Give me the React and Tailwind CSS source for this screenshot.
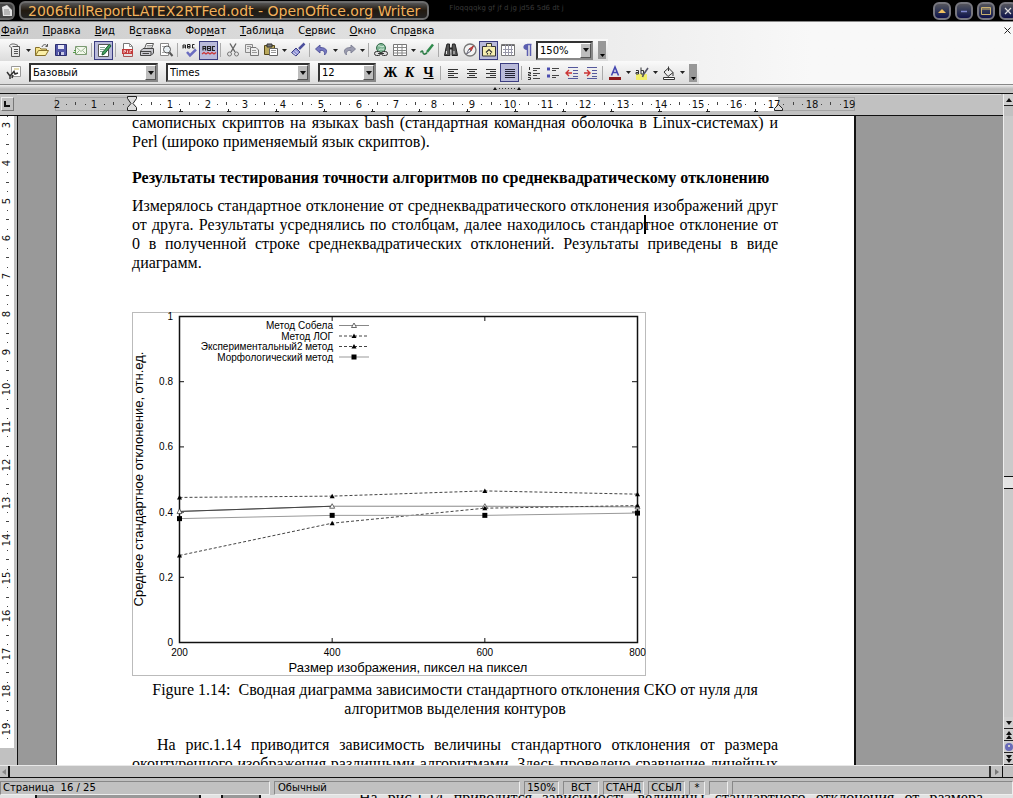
import React from "react";

const UI = "font-['DejaVu_Sans','Liberation_Sans',sans-serif]";

function Icon({ children }) {
  return (
    <svg width="16" height="16" viewBox="0 0 16 16" fill="none" stroke="#333" strokeWidth="1" aria-hidden="true" className="shrink-0">
      {children}
    </svg>
  );
}

const icons = {
  fresh: (
    <Icon>
      <path d="M2.500 3.500 C5 1 8 2 11 3.500 M5.500 4.500 H12.500 V14.500 H4.500 V6 M7 7.500 H11 M7 9.500 H11 M7 11.500 H11" stroke="#555" />
      <path d="M2 4 L5 6" stroke="#777" />
    </Icon>
  ),
  open: (
    <Icon>
      <path d="M1.500 13.500 V5.500 H5.500 L7 7 H12.500 V9" fill="#f5e38a" stroke="#86702a" />
      <path d="M1.500 13.500 L4.500 8.500 H14.500 L11.500 13.500 Z" fill="#fbf0a8" stroke="#86702a" />
      <path d="M8 5 C9 2 12 2 13 4 M11.500 4.500 H13.500 V2" stroke="#555" />
    </Icon>
  ),
  save: (
    <Icon>
      <path d="M2.500 2.500 H13.500 V13.500 H2.500 Z" fill="#5357a8" stroke="#2c2f70" />
      <path d="M5 3 H11 V7 H5 Z" fill="#e8e8f6" stroke="none" />
      <path d="M5 10 H11 V13 H5 Z" fill="#c9cbe6" stroke="none" />
      <path d="M6 10 H8 V13 H6 Z" fill="#2c2f70" stroke="none" />
    </Icon>
  ),
  mail: (
    <Icon>
      <path d="M3.500 4.500 H14.500 V12.500 H3.500 Z" fill="#f2f8ec" stroke="#7b9a72" />
      <path d="M4 5 L9 9.500 L14 5 M4 12 L7.500 8.500 M14 12 L10.500 8.500" stroke="#9db894" />
      <path d="M1 10.500 H4 M2 8.500 H4" stroke="#559a48" />
    </Icon>
  ),
  edit: (
    <Icon>
      <path d="M2.500 2.500 H12.500 V14.500 H2.500 Z" fill="#fff" stroke="#555" />
      <path d="M4 5.500 H9 M4 7.500 H8 M4 9.500 H7" stroke="#8a9" />
      <path d="M13.500 2 L15 4 L8.500 12 L6 13 L6.500 10.500 Z" fill="#3fa15c" stroke="#1f5c34" />
    </Icon>
  ),
  pdf: (
    <Icon>
      <path d="M3.500 7 V1.500 H9.500 L12.500 4.500 V7" fill="#fff" stroke="#777" />
      <path d="M9.500 1.500 V4.500 H12.500" stroke="#999" />
      <path d="M2 7 H13 V12 H2 Z" fill="#c33a3a" stroke="none" />
      <path d="M4 11 V8.500 H5.500 V10 M7.500 11 V8.500 M10 11 V8.500 H12" stroke="#f4c8c8" />
      <path d="M3.500 12 V14.500 H12.500 V12" stroke="#a55" />
    </Icon>
  ),
  print: (
    <Icon>
      <path d="M5.500 6.500 L7.500 1.500 H14.500 L12.500 6.500" fill="#fff" stroke="#555" />
      <path d="M8 3.500 H13 M7.500 5 H12" stroke="#999" />
      <path d="M1.500 9 L4 6.500 H14.500 V11 L12 13.500 H1.500 Z" fill="#c9c9cf" stroke="#444" />
      <path d="M2 9.500 H12 V13 M3.500 11.500 H10" stroke="#444" />
    </Icon>
  ),
  preview: (
    <Icon>
      <path d="M2.500 1.500 H10.500 V13.500 H2.500 Z" fill="#fff" stroke="#888" />
      <path d="M4 4.500 H7 M4 10.500 H6" stroke="#aaa" />
      <circle cx="9" cy="7.500" r="3.500" fill="#e9f0f4" stroke="#555" />
      <path d="M11.500 10.500 L14.500 14" stroke="#555" strokeWidth="2" />
    </Icon>
  ),
  spell: (
    <Icon>
      <path d="M1 6.500 V3 H3.500 V6.500 M1 5 H3.500 M5.500 6 V2.500 H8 V6 H5.500 M5.500 4.500 H8 M12.500 2.500 H10.500 V6 H12.500" stroke="#222" />
      <path d="M5 10 L8 13.500 L14 7.500" stroke="#6a6cc0" strokeWidth="2.500" />
    </Icon>
  ),
  autospell: (
    <Icon>
      <path d="M2 8.500 V4.500 H4.500 V8.500 M2 6.500 H4.500 M6.500 8.500 V4.500 H9.500 V8.500 H6.500 M6.500 6.500 H9.500 M14 4.500 H11.500 V8.500 H14" stroke="#222" strokeWidth="1.200" />
      <path d="M1 12 L3 10.500 L5 12 L7 10.500 L9 12 L11 10.500 L13 12 L15 10.500" stroke="#c33" strokeWidth="1.300" />
    </Icon>
  ),
  cut: (
    <Icon>
      <path d="M5 1.500 L10 10 M11 1.500 L6 10" stroke="#666" strokeWidth="1.400" />
      <circle cx="4.500" cy="12" r="2" stroke="#777" />
      <circle cx="11.500" cy="12" r="2" stroke="#777" />
    </Icon>
  ),
  copy: (
    <Icon>
      <path d="M1.500 2.500 H8.500 V10.500 H1.500 Z" fill="#e8e8e8" stroke="#888" />
      <path d="M6.500 5.500 H12 L14.500 8 V13.500 H6.500 Z" fill="#eee" stroke="#777" />
      <path d="M3 4.500 H7 M3 6.500 H5 M8 8.500 H12 M8 10.500 H13" stroke="#999" />
    </Icon>
  ),
  paste: (
    <Icon>
      <path d="M1.500 3.500 H11.500 V12.500 H1.500 Z" fill="#b9a85c" stroke="#55481a" />
      <path d="M4 2 H9 V5 H4 Z" fill="#777" stroke="#333" />
      <path d="M6.500 6.500 H14.500 V13.500 H6.500 Z" fill="#fff" stroke="#666" />
      <path d="M8 8.500 H13 M8 10.500 H13" stroke="#999" />
    </Icon>
  ),
  brush: (
    <Icon>
      <path d="M14.500 1.500 L9 7" stroke="#4c4f9c" strokeWidth="2.500" />
      <path d="M6 6 L10 10 L6 14 L1.500 10.500 Z" fill="#8e91d4" stroke="#3c3f85" />
      <path d="M3 10.500 L6 13 M5 8.500 L8 11.500" stroke="#e3e4fa" />
    </Icon>
  ),
  undo: (
    <Icon>
      <path d="M6 3 L1.500 7 L6 11 V8.500 C9 8 11 9 10.500 13 C14 10 13.500 5.500 6 5.500 Z" fill="#7678c0" stroke="#54579c" />
    </Icon>
  ),
  redo: (
    <Icon>
      <path d="M10 3 L14.500 7 L10 11 V8.500 C7 8 5 9 5.500 13 C2 10 2.500 5.500 10 5.500 Z" fill="#9b9caf" stroke="#808296" />
    </Icon>
  ),
  link: (
    <Icon>
      <circle cx="8" cy="6" r="4.500" fill="#7db493" stroke="#356b4b" />
      <path d="M5 4 C7 3 8 6 11 4 M6 8 C8 6 9 8 11 7" stroke="#dff0e4" />
      <rect x="1.500" y="9.500" width="6" height="4" rx="2" fill="#ddd" stroke="#333" />
      <rect x="8.500" y="9.500" width="6" height="4" rx="2" fill="#ddd" stroke="#333" />
      <path d="M5 11.500 H11" stroke="#333" />
    </Icon>
  ),
  table: (
    <Icon>
      <path d="M1.500 2.500 H14.500 V13.500 H1.500 Z" fill="#fff" stroke="#777" />
      <path d="M1.500 5.500 H14.500 M1.500 8.500 H14.500 M1.500 11 H14.500 M5.500 2.500 V13.500 M10 2.500 V13.500" stroke="#888" />
    </Icon>
  ),
  pen: (
    <Icon>
      <path d="M14 2.500 L8 10" stroke="#2f8a4c" strokeWidth="2.500" />
      <path d="M1.500 10.500 C3 8 4 9 4 11 C5 13 7 12 8 10.500" stroke="#2a7a44" strokeWidth="1.500" />
    </Icon>
  ),
  find: (
    <Icon>
      <path d="M4 2 H6.500 V6 L7 13.500 H1.500 L3 6 Z M9.500 2 H12 L13 6 L14.500 13.500 H9 V6 Z" fill="#555" stroke="#222" />
      <path d="M6.500 6.500 H9.500" stroke="#222" strokeWidth="2" />
      <path d="M3.500 9 V12 M11 9 V12" stroke="#ddd" />
    </Icon>
  ),
  compass: (
    <Icon>
      <circle cx="8" cy="8" r="6" fill="#f3f3f3" stroke="#777" strokeWidth="1.300" />
      <path d="M11.500 4 L9 9 L7 7 Z" fill="#c44" stroke="#a33" />
      <path d="M4.500 12 L7 7 L9 9 Z" fill="#fff" stroke="#667" />
    </Icon>
  ),
  gallery: (
    <Icon>
      <path d="M1.500 4.500 H14.500 V14 H1.500 Z" fill="#f6eeb0" stroke="#333" />
      <path d="M5.500 4.500 V1.500 H10.500 V4.500" fill="#f6eeb0" stroke="#333" />
      <path d="M5 10.500 L8 7.500 L11 10.500 M6.500 11 V12.500 M9.500 11 V12.500" stroke="#333" strokeWidth="1.200" />
    </Icon>
  ),
  source: (
    <Icon>
      <path d="M1.500 2.500 H14.500 V13.500 H1.500 Z" fill="#fff" stroke="#777" />
      <path d="M2 3.500 H14" stroke="#666" />
      <path d="M5.500 2.500 V13.500 M8.500 2.500 V13.500 M11.500 2.500 V13.500 M3 7.500 H13 M3 10.500 H13" stroke="#99a" />
    </Icon>
  ),
  pilcrow: (
    <Icon>
      <path d="M8 2.500 H12.500 M8.500 2 V14 M11.500 2 V14" stroke="#5b5eb0" strokeWidth="1.500" />
      <path d="M8.500 2 C3 1.500 3 8.500 8.500 8 Z" fill="#5b5eb0" stroke="none" />
    </Icon>
  ),
  styles: (
    <Icon>
      <path d="M5.500 1.500 H14.500 V11.500 H5.500 Z" fill="#fff" stroke="#999" />
      <path d="M1 7 L4 11 V14 M4 11 L8 6.500 L9 9 L12 8 M7 10 L6 13" stroke="#333" strokeWidth="1.500" />
      <path d="M8 4 H13" stroke="#c8b860" />
    </Icon>
  ),
  left: (
    <Icon>
      <path d="M3 4.500 H13 M3 6.500 H9 M3 8.500 H13 M3 10.500 H9 M3 12.500 H13" stroke="#333" />
    </Icon>
  ),
  center: (
    <Icon>
      <path d="M3 4.500 H13 M5 6.500 H11 M3 8.500 H13 M5 10.500 H11 M3 12.500 H13" stroke="#333" />
    </Icon>
  ),
  right: (
    <Icon>
      <path d="M3 4.500 H13 M7 6.500 H13 M3 8.500 H13 M7 10.500 H13 M3 12.500 H13" stroke="#333" />
    </Icon>
  ),
  justify: (
    <Icon>
      <path d="M3 4.500 H13 M3 6.500 H13 M3 8.500 H13 M3 10.500 H13 M3 12.500 H13" stroke="#223" />
    </Icon>
  ),
  numbers: (
    <Icon>
      <path d="M3.500 2 V5 M2 7.500 H4.500 V9 H2.500 V10.500 H5 M2 12.500 H4.500 V14.500 H2" stroke="#333" />
      <path d="M7 3.500 H14 M7 5.500 H11 M7 8.500 H14 M7 10.500 H11 M7 13.500 H14" stroke="#444" />
    </Icon>
  ),
  bullets: (
    <Icon>
      <path d="M2 4 H5 M2 11 H5" stroke="#4a4db0" strokeWidth="3" />
      <path d="M7 3.500 H14 M7 5.500 H11 M7 10.500 H14 M7 12.500 H11" stroke="#444" />
    </Icon>
  ),
  outdent: (
    <Icon>
      <path d="M4 2.500 H14 M9 5.500 H14 M9 8.500 H14 M9 11.500 H14 M4 13.500 H14" stroke="#55589c" />
      <path d="M8 8 H3 M5 5 L2 8 L5 11" stroke="#c33" strokeWidth="1.400" />
    </Icon>
  ),
  indent: (
    <Icon>
      <path d="M4 2.500 H14 M9 5.500 H14 M9 8.500 H14 M9 11.500 H14 M4 13.500 H14" stroke="#55589c" />
      <path d="M1 8 H6 M4 5 L7 8 L4 11" stroke="#c33" strokeWidth="1.400" />
    </Icon>
  ),
  color: (
    <Icon>
      <path d="M4.500 10.500 L8 2 L11.500 10.500 M5.500 7.500 H10.500" stroke="#4548b0" strokeWidth="1.600" />
      <path d="M2 12 H14 V15 H2 Z" fill="#8c1a1a" stroke="none" />
    </Icon>
  ),
  marker: (
    <Icon>
      <path d="M2 9 H13 V15 H2 Z" fill="#f1ee6a" stroke="none" />
      <path d="M2 5.500 H4.500 V9 H2 V7.500 H4.500 M7 2.500 V9 H9.500 V5.500 H7" stroke="#333" />
      <path d="M14 3 L9.500 9.500 L8.500 12" stroke="#556" strokeWidth="1.600" />
    </Icon>
  ),
  bucket: (
    <Icon>
      <path d="M3 7 L7.500 3 L12 7.500 L7 11.500 Z" fill="#eee" stroke="#333" />
      <path d="M7.500 6 V1.500 M12 7.500 V11" stroke="#333" />
      <path d="M2.500 12.500 H13.500 V14.500 H2.500 Z" fill="#fff" stroke="#333" />
    </Icon>
  ),
};

function Tool({ label, icon, pressed, menu, children }) {
  return (
    <>
      <button
        type="button"
        aria-label={label}
        className={
          "flex h-[19px] w-[19px] shrink-0 items-center justify-center " +
          (pressed ? "border border-[#3b3d80] bg-[#b9bada]" : "")
        }
      >
        {icon ? icons[icon] : children}
      </button>
      {menu && (
        <button type="button" aria-label={label + ": меню"} className="flex h-[19px] w-2 shrink-0 items-center justify-center">
          <svg width="5" height="3" viewBox="0 0 5 3" aria-hidden="true"><path d="M0 0 H5 L2.500 3 Z" fill="#222" /></svg>
        </button>
      )}
    </>
  );
}

function Sep() {
  return (
    <div className="flex w-[5px] shrink-0 justify-center">
      <div className="h-[14px] w-px bg-[#aaa]" />
    </div>
  );
}

function Combo({ label, value, width }) {
  return (
    <div className={"relative h-[19px] shrink-0 " + width}>
      <select
        aria-label={label}
        className="block h-full w-full appearance-none border-2 border-t-[#333] border-l-[#333] border-r-[#888] border-b-[#888] bg-white pl-[2px] text-[10px] leading-[15px] text-black"
      >
        <option>{value}</option>
      </select>
      <span className="pointer-events-none absolute top-[2px] right-[2px] flex h-[15px] w-[11px] items-center justify-center border border-t-white border-l-white border-r-[#555] border-b-[#555] bg-[#bdbdbd]">
        <svg width="6" height="4" viewBox="0 0 6 4" aria-hidden="true"><path d="M0 0 H6 L3 4 Z" fill="#111" /></svg>
      </span>
    </div>
  );
}

function Overflow() {
  return (
    <button type="button" aria-label="Параметры панели" className="flex h-[18px] w-2 shrink-0 items-end justify-center bg-[#989898] pb-[2px]">
      <svg width="5" height="3" viewBox="0 0 5 3" aria-hidden="true"><path d="M0 0 H5 L2.500 3 Z" fill="#000" /></svg>
    </button>
  );
}

function WindowButton({ label, children }) {
  return (
    <button type="button" aria-label={label} className="flex h-[18px] w-[18px] shrink-0 items-center justify-center rounded-[6px] border-2 border-[#77777f] bg-linear-to-b from-[#55555c] to-[#10104a]">
      <svg width="12" height="12" viewBox="0 0 12 12" fill="none" aria-hidden="true">{children}</svg>
    </button>
  );
}

function TitleBar() {
  return (
    <header className="flex h-[22px] shrink-0 items-center overflow-hidden border-b border-[#888] bg-black">
      <div className="flex h-[18px] w-[15px] shrink-0 items-center justify-center rounded-r-[6px] border-2 border-l-0 border-[#666] bg-[#444]">
        <svg width="12" height="14" viewBox="0 0 12 14" aria-hidden="true">
          <path d="M1 3 L6 1 L11 6 V12 H2 Z" fill="#e4e4e4" />
          <path d="M3 6 H8 M3 8 H9 M3 10 H9" stroke="#888" />
        </svg>
      </div>
      <h1 className="ml-1 flex h-[19px] shrink-0 items-center rounded-[6px] border-2 border-[#6c6c6c] bg-linear-to-b from-[#555] via-[#221a10] to-[#222] px-[7px] text-[14px] leading-4 whitespace-nowrap text-[#f2b25c]">
        2006fullReportLATEX2RTFed.odt - OpenOffice.org Writer
      </h1>
      <span className="ml-5 self-start text-[7px] leading-4 whitespace-nowrap text-[#3a3a3a]">Floqqqqkg gf jf d jg jd56 5d6 dt j</span>
      <div className="-mr-1 ml-auto flex gap-1">
        <WindowButton label="Свернуть в заголовок"><path d="M2 8 L6 4 L10 8 Z" fill="#f0c060" /></WindowButton>
        <WindowButton label="Свернуть"><path d="M3 6.500 H9" stroke="#8088d0" strokeWidth="1.500" /></WindowButton>
        <WindowButton label="Развернуть"><path d="M1.500 2.500 H10.500 V9.500 H1.500 Z M1.500 4 H10.500" stroke="#c9b070" /></WindowButton>
        <WindowButton label="Закрыть"><path d="M3 3 L9 9 M9 3 L3 9" stroke="#ddd" strokeWidth="1.200" /></WindowButton>
      </div>
    </header>
  );
}

const menus = [
  ["", "Ф", "айл"],
  ["", "П", "равка"],
  ["", "В", "ид"],
  ["В", "с", "тавка"],
  ["Фор", "м", "ат"],
  ["", "Т", "аблица"],
  ["С", "е", "рвис"],
  ["", "О", "кно"],
  ["Спр", "а", "вка"],
];

function MenuBar() {
  return (
    <nav aria-label="Главное меню" className="flex h-[17px] shrink-0 items-center pl-px text-[10px] leading-4">
      <div className="flex gap-[14px]">
        {menus.map(([a, b, c]) => (
          <button type="button" key={a + b + c} className="whitespace-nowrap">
            {a}<u>{b}</u>{c}
          </button>
        ))}
      </div>
      <button type="button" aria-label="Закрыть документ" className="mr-[2px] ml-auto">
        <svg width="7" height="7" viewBox="0 0 7 7" aria-hidden="true"><path d="M0.500 0.500 L6.500 6.500 M6.500 0.500 L0.500 6.500" stroke="#222" /></svg>
      </button>
    </nav>
  );
}

function StandardBar() {
  return (
    <div role="toolbar" aria-label="Стандартная" className="flex h-[22px] w-fit shrink-0 items-center bg-linear-to-b from-[#fafafa] to-[#dcdcdc] pr-[2px] pl-[5px]">
      <Tool label="Создать" icon="fresh" menu />
      <Tool label="Открыть" icon="open" />
      <Tool label="Сохранить" icon="save" />
      <Tool label="Отправить" icon="mail" />
      <Sep />
      <Tool label="Редактировать" icon="edit" pressed />
      <Sep />
      <Tool label="Экспорт в PDF" icon="pdf" />
      <Tool label="Печать" icon="print" />
      <Tool label="Просмотр" icon="preview" />
      <Sep />
      <Tool label="Орфография" icon="spell" />
      <Tool label="Автопроверка" icon="autospell" pressed />
      <Sep />
      <Tool label="Вырезать" icon="cut" />
      <Tool label="Копировать" icon="copy" />
      <Tool label="Вставить" icon="paste" menu />
      <Tool label="Копировать формат" icon="brush" />
      <Sep />
      <Tool label="Отменить" icon="undo" menu />
      <Tool label="Вернуть" icon="redo" menu />
      <Sep />
      <Tool label="Гиперссылка" icon="link" />
      <Tool label="Таблица" icon="table" menu />
      <Tool label="Рисование" icon="pen" />
      <Sep />
      <Tool label="Найти" icon="find" />
      <Tool label="Навигатор" icon="compass" />
      <Tool label="Галерея" icon="gallery" pressed />
      <Tool label="Источники данных" icon="source" />
      <Tool label="Непечатаемые символы" icon="pilcrow" />
      <Combo label="Масштаб" value="150%" width="w-[57px]" />
      <div className="w-[5px]" />
      <Overflow />
    </div>
  );
}

function FormatBar() {
  return (
    <div role="toolbar" aria-label="Форматирование" className="flex h-[23px] w-fit shrink-0 items-center bg-linear-to-b from-[#fafafa] to-[#dcdcdc] pr-[2px] pl-1">
      <Tool label="Стили" icon="styles" />
      <div className="flex gap-2 pr-[5px] pl-[6px]">
        <Combo label="Стиль" value="Базовый" width="w-[129px]" />
        <Combo label="Шрифт" value="Times" width="w-[144px]" />
        <Combo label="Размер" value="12" width="w-[58px]" />
      </div>
      <Tool label="Жирный"><b className="font-['Liberation_Serif',serif] text-[14px] leading-4">Ж</b></Tool>
      <Tool label="Курсив"><b className="font-['Liberation_Serif',serif] text-[14px] leading-4 italic">К</b></Tool>
      <Tool label="Подчёркнутый"><b className="font-['Liberation_Serif',serif] text-[14px] leading-4 underline">Ч</b></Tool>
      <Sep />
      <Tool label="По левому краю" icon="left" />
      <Tool label="По центру" icon="center" />
      <Tool label="По правому краю" icon="right" />
      <Tool label="По ширине" icon="justify" pressed />
      <Sep />
      <Tool label="Нумерация" icon="numbers" />
      <Tool label="Маркеры" icon="bullets" />
      <Tool label="Уменьшить отступ" icon="outdent" />
      <Tool label="Увеличить отступ" icon="indent" />
      <Sep />
      <Tool label="Цвет шрифта" icon="color" menu />
      <Tool label="Выделение цветом" icon="marker" menu />
      <Tool label="Цвет фона" icon="bucket" menu />
      <div className="w-[3px]" />
      <Overflow />
    </div>
  );
}

const CM = 37.75;

function HorizontalRuler() {
  const zero = 115;
  const marks = [];
  for (let q = -8; q <= 76; q++) {
    const x = Math.round(zero + (q * CM) / 4);
    if (q % 4 === 0) {
      if (q !== 0) marks.push(<text key={q} x={x} y="14" textAnchor="middle" fontSize="10" fill="#111">{Math.abs(q / 4)}</text>);
    } else if (q % 2 === 0) marks.push(<path key={q} d={`M${x + 0.5} 8 v3`} stroke="#444" />);
    else marks.push(<path key={q} d={`M${x} 10.500 h1`} stroke="#444" />);
  }
  const tabs = Array.from({ length: 13 }, (_, i) => Math.round(zero + (i + 1) * 47.9));
  return (
    <div className="flex h-[22px] shrink-0 border-b border-[#111] bg-[#c1c1c1]">
      <button type="button" aria-label="Табулятор" className="mt-[3px] ml-px flex h-[14px] w-[13px] shrink-0 items-center justify-center border border-t-[#eee] border-l-[#eee] border-r-[#777] border-b-[#777]">
        <svg width="7" height="6" viewBox="0 0 7 6" aria-hidden="true"><path d="M1 0 V5 H6" fill="none" stroke="#111" strokeWidth="2" /></svg>
      </button>
      <svg height="21" className="ml-[3px] block min-w-0 flex-1" aria-hidden="true">
        <path d="M0 0.500 H984" stroke="#ddd" />
        <rect x="38.500" y="3.500" width="799" height="13" fill="#c4c4c4" stroke="#888" strokeDasharray="1 1" />
        <rect x="115" y="3" width="646" height="14" fill="#fff" />
        {marks}
        {tabs.map((x) => <path key={x} d={`M${x - 1} 17.500 h4 M${x + 0.5} 15 v3`} stroke="#222" />)}
        <path d="M110.500 2.500 H119.500 V4.500 L116 9.500 L119.500 13.500 V16.500 H110.500 V13.500 L114 9.500 L110.500 4.500 Z" fill="#ddd" stroke="#222" />
        <path d="M757.500 16.500 V14.500 L761.500 10.500 L765.500 14.500 V16.500 Z" fill="#ddd" stroke="#222" />
      </svg>
    </div>
  );
}

function VerticalRuler() {
  const marks = [];
  for (let q = 11; q <= 77; q++) {
    const y = Math.round(9 + ((q - 12) * CM) / 4);
    if (q % 4 === 0)
      marks.push(<text key={q} transform={`translate(10 ${y}) rotate(-90)`} textAnchor="middle" fontSize="10" fill="#111">{q / 4}</text>);
    else if (q % 2 === 0) marks.push(<path key={q} d={`M6 ${y + 0.5} h3`} stroke="#444" />);
    else marks.push(<path key={q} d={`M7 ${y + 0.5} h1`} stroke="#444" />);
  }
  return (
    <div className="w-[17px] shrink-0 overflow-hidden bg-[#c1c1c1]">
      <svg width="14" height="632" className="block bg-white" aria-hidden="true">{marks}</svg>
    </div>
  );
}

const px = (v) => 47.5 + ((v - 200) / 600) * 458;
const py = (v) => 330.5 - v * 326;
const xs = [200, 400, 600, 800];

const triangle = (x, y) => `M${x - 2.5} ${y + 2} H${x + 2.5} L${x} ${y - 2.5} Z`;

const series = [
  { name: "Метод Собела", values: [0.402, 0.418, 0.418, 0.416], shape: "open", stroke: "#888", dash: "" },
  { name: "Метод ЛОГ", values: [0.445, 0.449, 0.465, 0.455], shape: "tri", stroke: "#444", dash: "3 2" },
  { name: "Экспериментальный2 метод", values: [0.267, 0.366, 0.412, 0.42], shape: "tri", stroke: "#444", dash: "3 2" },
  { name: "Морфологический метод", values: [0.38, 0.39, 0.39, 0.397], shape: "box", stroke: "#999", dash: "" },
];

function Marker({ shape, x, y }) {
  if (shape === "box") return <rect x={x - 2.5} y={y - 2.5} width="5" height="5" fill="#000" />;
  return <path d={triangle(x, y)} fill={shape === "open" ? "#fff" : "#000"} stroke={shape === "open" ? "#444" : "none"} strokeWidth="0.800" />;
}

function Chart() {
  return (
    <svg viewBox="0 0 514 364" className="block w-[514px] max-w-full font-['Liberation_Sans',sans-serif]" role="img" aria-label="Сводная диаграмма">
      <rect x="0.500" y="0.500" width="513" height="363" fill="#fff" stroke="#bbb" />
      <rect x="47.500" y="4.500" width="458" height="326" fill="none" stroke="#111" strokeWidth="1.500" />
      {[0.2, 0.4, 0.6, 0.8].map((v) => (
        <path key={v} d={`M47 ${py(v)} h5 M505 ${py(v)} h-5`} stroke="#111" />
      ))}
      {[400, 600].map((v) => (
        <path key={v} d={`M${px(v)} 5 v4 M${px(v)} 330 v-4`} stroke="#111" />
      ))}
      {[0, 0.2, 0.4, 0.6, 0.8, 1].map((v) => (
        <text key={v} x="41" y={py(v) + 3.5} textAnchor="end" fontSize="10">{v}</text>
      ))}
      {xs.map((v) => (
        <text key={v} x={px(v)} y="344" textAnchor="middle" fontSize="10">{v}</text>
      ))}
      {series.map((s, i) => (
        <g key={s.name}>
          <polyline points={xs.map((x, k) => `${px(x)},${py(s.values[k])}`).join(" ")} fill="none" stroke={s.stroke} strokeDasharray={s.dash} />
          {i === 0 && <path d={`M${px(200)} ${py(0.402)} L${px(400)} ${py(0.418)}`} stroke="#444" />}
          {xs.map((x, k) => <Marker key={x} shape={s.shape} x={px(x)} y={py(s.values[k])} />)}
          <text x="201" y={17 + i * 10.5} textAnchor="end" fontSize="10">{s.name}</text>
          <path d={`M207 ${13.5 + i * 10.5} h30`} stroke={s.stroke} strokeDasharray={s.dash} />
          <Marker shape={s.shape} x={222} y={13.5 + i * 10.5} />
        </g>
      ))}
      <text x="276" y="360" textAnchor="middle" fontSize="13">Размер изображения, пиксел на пиксел</text>
      <text transform="translate(11 167) rotate(-90)" textAnchor="middle" fontSize="13">Среднее стандартное отклонение, отн.ед.</text>
    </svg>
  );
}

function Line({ children, indent }) {
  return <span className={"block whitespace-nowrap [text-align-last:justify] " + (indent ? "pl-[25px]" : "")}>{children}</span>;
}

function Page() {
  return (
    <article className="ml-[38px] w-[800px] shrink-0 border-r-2 border-l border-r-[#111] border-l-[#444] bg-white pr-[76px] pl-[75px] font-['Liberation_Serif',serif] text-[16px] leading-[19px] text-black">
      <p className="-mt-[3px]">
        <Line>самописных скриптов на языках bash (стандартная командная оболочка в Linux-системах) и</Line>
        <span className="block">Perl (широко применяемый язык скриптов).</span>
      </p>
      <h2 className="mt-[17px] font-bold whitespace-nowrap">Результаты тестирования точности алгоритмов по среднеквадратическому отклонению</h2>
      <p className="mt-[9px]">
        <Line>Измерялось стандартное отклонение от среднеквадратического отклонения изображений друг</Line>
        <Line>
          от друга. Результаты усреднялись по столбцам, далее находилось стандар
          <span className="-mr-[2px] inline-block h-[19px] w-[2px] bg-black align-bottom" />
          тное отклонение от
        </Line>
        <Line>0 в полученной строке среднеквадратических отклонений. Результаты приведены в виде</Line>
        <span className="block">диаграмм.</span>
      </p>
      <figure className="mt-10">
        <Chart />
        <figcaption className="mt-1 text-center">
          Figure 1.14:&nbsp; Сводная диаграмма зависимости стандартного отклонения СКО от нуля для
          <br />
          алгоритмов выделения контуров
        </figcaption>
      </figure>
      <p className="mt-[17px]">
        <Line indent>На рис.1.14 приводится зависимость величины стандартного отклонения от размера</Line>
        <Line>оконтуренного изображения различными алгоритмами. Здесь проведено сравнение линейных</Line>
      </p>
    </article>
  );
}

function ScrollButton({ label, d, fill }) {
  return (
    <button type="button" aria-label={label} className="flex h-[12px] w-full shrink-0 items-center justify-center border-b border-[#222] bg-[#cfcfcf]">
      <svg width="8" height="8" viewBox="0 0 8 8" aria-hidden="true"><path d={d} fill={fill || "#111"} /></svg>
    </button>
  );
}

function VerticalScroll() {
  return (
    <div className="flex w-[10px] shrink-0 flex-col border-l border-[#eee] bg-[#cacaca]">
      <div className="min-h-0 flex-[362] border-b border-[#111]" />
      <div className="h-[12px] shrink-0 border-b border-[#111] bg-[#e4e4e4]" />
      <div className="min-h-0 flex-[230]" />
      <ScrollButton label="Вниз" d="M1 2 H7 L4 6 Z" />
      <ScrollButton label="Предыдущая страница" d="M1 4 H7 L4 0 Z M1 8 H7 L4 4 Z" />
      <ScrollButton label="Навигация" d="M4 0 A4 4 0 1 0 4 8 A4 4 0 1 0 4 0 Z M3 2 H5 V4 H3 Z" fill="#6a6cb8" />
      <ScrollButton label="Следующая страница" d="M1 0 H7 L4 4 Z M1 4 H7 L4 8 Z" />
    </div>
  );
}

function Cell({ children, className }) {
  return (
    <div className={"flex h-[14px] items-center overflow-hidden border border-t-[#888] border-l-[#888] border-r-[#eee] border-b-[#eee] whitespace-nowrap " + className}>
      {children}
    </div>
  );
}

export default function App() {
  return (
    <div className={"flex h-screen w-full flex-col overflow-hidden bg-[#c1c1c1] text-black " + UI}>
      <TitleBar />
      <div className="flex shrink-0 flex-col bg-linear-to-r from-[#cccccc] to-[#f8f8f8] to-80%">
        <MenuBar />
        <StandardBar />
        <FormatBar />
      </div>
      <div className="flex h-[10px] shrink-0 items-center justify-center border-t border-b border-t-[#888] border-b-[#111] bg-linear-to-b from-[#eee] via-[#bbb] to-[#c4c4c4]">
        <svg width="28" height="4" viewBox="0 0 28 4" aria-hidden="true">
          <path d="M0 3 L2 0 L4 3 Z M24 3 L26 0 L28 3 Z" fill="#111" />
          <path d="M6 1.500 H22" stroke="#333" strokeDasharray="1 2" />
        </svg>
      </div>
      <div className="flex shrink-0">
        <div className="min-w-0 flex-1"><HorizontalRuler /></div>
        <div className="w-[10px] shrink-0 border-l border-[#eee]">
          <ScrollButton label="Вверх" d="M1 6 H7 L4 2 Z" />
        </div>
      </div>
      <div className="flex min-h-0 flex-1">
        <VerticalRuler />
        <main className="flex min-w-0 flex-1 overflow-hidden border-l border-[#111] bg-[#999]">
          <Page />
        </main>
        <VerticalScroll />
      </div>
      <div className="flex h-[13px] shrink-0 border-t border-b border-t-[#e8e8e8] border-b-[#111] bg-[#c1c1c1]">
        <button type="button" aria-label="Влево" className="flex w-[10px] shrink-0 items-center justify-center border-r-2 border-[#111]">
          <svg width="4" height="6" viewBox="0 0 4 6" aria-hidden="true"><path d="M4 0 V6 L0 3 Z" fill="#888" /></svg>
        </button>
        <div className="flex-1 border-r-2 border-[#333]" />
        <button type="button" aria-label="Вправо" className="mr-[10px] flex w-[12px] shrink-0 items-center justify-center border-r border-[#111]">
          <svg width="4" height="6" viewBox="0 0 4 6" aria-hidden="true"><path d="M0 0 V6 L4 3 Z" fill="#777" /></svg>
        </button>
      </div>
      <footer className="flex shrink-0 gap-1 pt-[3px] text-[10px] leading-[12px]">
        <Cell className="w-[270px] pl-[2px]"><span className="whitespace-pre">Страница  16 / 25</span></Cell>
        <Cell className="w-[246px] pl-[3px]">Обычный</Cell>
        <Cell className="w-[35px] justify-center">150%</Cell>
        <Cell className="w-[36px] justify-center">ВСТ</Cell>
        <Cell className="w-[41px] justify-center">СТАНД</Cell>
        <Cell className="w-[37px] justify-center">ССЫЛ</Cell>
        <Cell className="w-[16px] justify-center">*</Cell>
        <Cell className="w-[19px]" />
        <Cell className="flex-1" />
      </footer>
      <div aria-hidden="true" className="flex h-[3px] shrink-0 overflow-hidden bg-[#e2e2e2]">
        <div className="ml-[35px] h-full w-[166px] shrink-0 border-r-2 border-l-2 border-[#111] bg-[#999]" />
        <div className="ml-5 h-full w-10 shrink-0 border-r-2 border-l-2 border-[#111] bg-[#999]" />
        <div className="-mt-1 ml-[98px] w-[624px] shrink-0 font-['Liberation_Serif',serif] text-[16px] leading-[14px] whitespace-nowrap [text-align-last:justify]">
          На рис.1.14 приводится зависимость величины стандартного отклонения от размера
        </div>
      </div>
    </div>
  );
}
